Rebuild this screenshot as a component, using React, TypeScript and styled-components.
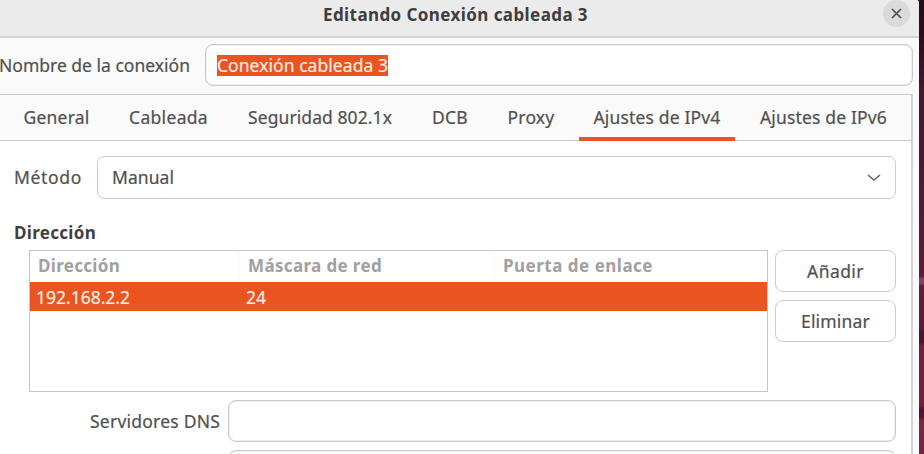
import React, { useLayoutEffect, useRef, useState } from "react";
import styled, { createGlobalStyle } from "styled-components";

const color = {
  accent: "#e95420",
  ink: "#505050",
  base: "#ffffff",
  window: "#fafafa",
};

const GlobalStyle = createGlobalStyle`
  * { box-sizing: border-box; }
  body {
    margin: 0;
    overflow: hidden;
    font-family: "Noto Sans", "Open Sans", sans-serif;
    font-size: 17.5px;
    line-height: 22px;
    color: ${color.ink};
  }
`;

const Desktop = styled.div`
  width: 924px;
  height: 454px;
  overflow: hidden;
  background: linear-gradient(
    to bottom,
    #260a20 0px,
    #2d0b25 35px,
    #481534 90px,
    #501938 200px,
    #5c1c3c 276px,
    #804269 279px,
    #804269 283px,
    #5e1d3d 286px,
    #5c1b3c 328px,
    #4b1236 332px,
    #4d1337 342px,
    #6b213f 346px,
    #6e2440 406px,
    #4f1237 409px,
    #541439 417px,
    #762844 420px,
    #722644 454px
  );
`;

const Window = styled.main`
  display: flex;
  flex-direction: column;
  width: 919px;
  height: 454px;
  overflow: hidden;
  background: ${color.window};
  border-top-right-radius: 3px;
`;

const TitleBar = styled.header`
  display: grid;
  grid-template-columns: 323px 1fr 27px;
  flex: none;
  height: 38px;
  padding-right: 9px;
  background: #ebebeb;
  border-bottom: 2px solid #d4d4d4;
`;

const Title = styled.h1`
  grid-column: 2;
  margin: 0;
  padding-top: 4px;
  font-size: 17px;
  line-height: 22px;
  color: #3d3d3d;
`;

const CloseButton = styled.button`
  display: flex;
  align-items: center;
  justify-content: center;
  width: 27px;
  height: 27px;
  padding: 0;
  border: 0;
  border-radius: 50%;
  background: #dadada;
`;

const NameRow = styled.div`
  display: flex;
  flex: none;
  align-items: center;
  height: 56px;
  padding: 0 6px 2px 0;
`;

const NameLabel = styled.label`
  width: 205px;
  margin-left: -1px;
  flex: none;
`;

const Entry = styled.div`
  display: flex;
  flex: 1;
  align-items: center;
  height: 42px;
  margin-left: 1px;
  padding: 0 11px;
  background: ${color.base};
  border: 1px solid #c9c9c9;
  box-shadow: inset 0 0 0 0.5px #e0e0e0;
  border-radius: 8px;
`;

const Selection = styled.span`
  display: block;
  height: 21px;
  line-height: 20px;
  background: ${color.accent};
  color: #fdece5;
`;

const Notebook = styled.section`
  flex: 1;
  width: 913px;
  border-top: 1px solid #c8c8c8;
  border-right: 2px solid #d4d4d4;
  background: ${color.base};
`;

const Tabs = styled.nav`
  display: flex;
  gap: 10px;
  height: 46px;
  padding-left: 9px;
  background: ${color.window};
  box-shadow: inset 0 -1px #c8c8c8;
`;

const Tab = styled.div<{ $width: number; $active?: boolean }>`
  display: flex;
  align-items: center;
  justify-content: center;
  flex: none;
  width: ${(p) => p.$width}px;
  height: 46px;
  border-bottom: 4px solid ${(p) => (p.$active ? color.accent : "transparent")};
  padding-top: 1px;
`;

const Page = styled.div`
  padding: 15px 15px 0 14px;
`;

const MethodRow = styled.div`
  display: flex;
  align-items: center;
  gap: 15px;
  height: 43px;
  line-height: 21px;
`;

const Combo = styled.div`
  display: flex;
  flex: 1;
  align-items: center;
  justify-content: space-between;
  height: 43px;
  padding: 0 14px;
  border: 1px solid #cccccc;
  border-radius: 7px;
`;

const SectionTitle = styled.h2`
  margin: 0;
  padding-top: 23px;
  height: 51px;
  font-size: 17px;
  line-height: 22px;
  color: #3f3f3f;
`;

const AddressArea = styled.div`
  display: grid;
  grid-template-columns: 739px 121px;
  column-gap: 7px;
  margin-left: 15px;
`;

const Table = styled.div`
  height: 142px;
  border: 1px solid #c6c6c6;
`;

const columns = "210px 255px 1fr";

const TableHead = styled.div`
  display: grid;
  grid-template-columns: ${columns};
  height: 31px;
  font-size: 17px;
  font-weight: 700;
  color: #a0a0a0;
`;

const HeadCell = styled.div`
  padding: 4px 0 0 8px;
  border-right: 1px solid #f8f8f8;
  &:last-child {
    border-right: 0;
  }
`;

const TableRow = styled.div`
  display: grid;
  grid-template-columns: ${columns};
  height: 29px;
  background: ${color.accent};
  color: #fdece5;
`;

const RowCell = styled.div`
  padding: 4px 0 0 6px;
`;

const Actions = styled.div`
  display: flex;
  flex-direction: column;
  gap: 8px;
`;

const ActionButton = styled.button`
  display: flex;
  align-items: center;
  justify-content: center;
  height: 42px;
  padding: 0;
  border: 1px solid #cccccc;
  border-radius: 8px;
  background: ${color.base};
  font: inherit;
  color: inherit;
`;

const FieldRow = styled.div`
  display: grid;
  grid-template-columns: 206px 1fr;
  column-gap: 7px;
  align-items: center;
  padding-top: 8px;
`;

const FieldLabel = styled.label`
  display: flex;
  justify-content: flex-end;
`;

const Spaced = styled.span`
  display: inline-block;
  white-space: pre;
  -webkit-text-stroke: 0.2px currentColor;

  h1 &,
  h2 &,
  ${TableHead} & {
    -webkit-text-stroke: 0;
  }
`;

/** Text tracked so that it occupies exactly the given width. */
function FitText({ width, children }: { width: number; children: string }) {
  const ref = useRef<HTMLSpanElement>(null);
  const [tracking, setTracking] = useState(0);
  useLayoutEffect(() => {
    if (ref.current) {
      const natural = ref.current.getBoundingClientRect().width;
      setTracking((width - natural) / children.length);
    }
  }, [width, children]);
  return (
    <Spaced ref={ref} style={{ letterSpacing: tracking }}>
      {children}
    </Spaced>
  );
}

const tabs = [
  { label: "General", text: 66, width: 95 },
  { label: "Cableada", text: 79, width: 109 },
  { label: "Seguridad 802.1x", text: 144, width: 174 },
  { label: "DCB", text: 36, width: 66 },
  { label: "Proxy", text: 47, width: 76 },
  { label: "Ajustes de IPv4", text: 127, width: 156, active: true },
  { label: "Ajustes de IPv6", text: 127, width: 157 },
];

export default function App() {
  return (
    <>
      <GlobalStyle />
      <Desktop>
        <Window>
          <TitleBar>
            <Title>
              <FitText width={265}>Editando Conexión cableada 3</FitText>
            </Title>
            <CloseButton aria-label="Cerrar">
              <svg width="11" height="11" viewBox="0 0 11 11">
                <path d="M1 1l9 9M10 1l-9 9" stroke="#505050" strokeWidth="1.7" />
              </svg>
            </CloseButton>
          </TitleBar>
          <NameRow>
            <NameLabel>
              <FitText width={191}>Nombre de la conexión</FitText>
            </NameLabel>
            <Entry>
              <Selection>
                <FitText width={171}>Conexión cableada 3</FitText>
              </Selection>
            </Entry>
          </NameRow>
          <Notebook>
            <Tabs>
              {tabs.map((t) => (
                <Tab key={t.label} $width={t.width} $active={t.active}>
                  <FitText width={t.text}>{t.label}</FitText>
                </Tab>
              ))}
            </Tabs>
            <Page>
              <MethodRow>
                <FitText width={68}>Método</FitText>
                <Combo>
                  <FitText width={62}>Manual</FitText>
                  <svg width="15" height="9" viewBox="0 0 15 9">
                    <path d="M2 2l6 5 6-5" fill="none" stroke="#666" strokeWidth="1.6" />
                  </svg>
                </Combo>
              </MethodRow>
              <SectionTitle>
                <FitText width={82}>Dirección</FitText>
              </SectionTitle>
              <AddressArea>
                <Table>
                  <TableHead>
                    <HeadCell>
                      <FitText width={82}>Dirección</FitText>
                    </HeadCell>
                    <HeadCell>
                      <FitText width={134}>Máscara de red</FitText>
                    </HeadCell>
                    <HeadCell>
                      <FitText width={150}>Puerta de enlace</FitText>
                    </HeadCell>
                  </TableHead>
                  <TableRow>
                    <RowCell>
                      <FitText width={94}>192.168.2.2</FitText>
                    </RowCell>
                    <RowCell>
                      <FitText width={20}>24</FitText>
                    </RowCell>
                    <RowCell />
                  </TableRow>
                </Table>
                <Actions>
                  <ActionButton>
                    <FitText width={57}>Añadir</FitText>
                  </ActionButton>
                  <ActionButton>
                    <FitText width={69}>Eliminar</FitText>
                  </ActionButton>
                </Actions>
              </AddressArea>
              <FieldRow>
                <FieldLabel>
                  <FitText width={130}>Servidores DNS</FitText>
                </FieldLabel>
                <Entry />
              </FieldRow>
              <FieldRow>
                <span />
                <Entry />
              </FieldRow>
            </Page>
          </Notebook>
        </Window>
      </Desktop>
    </>
  );
}
